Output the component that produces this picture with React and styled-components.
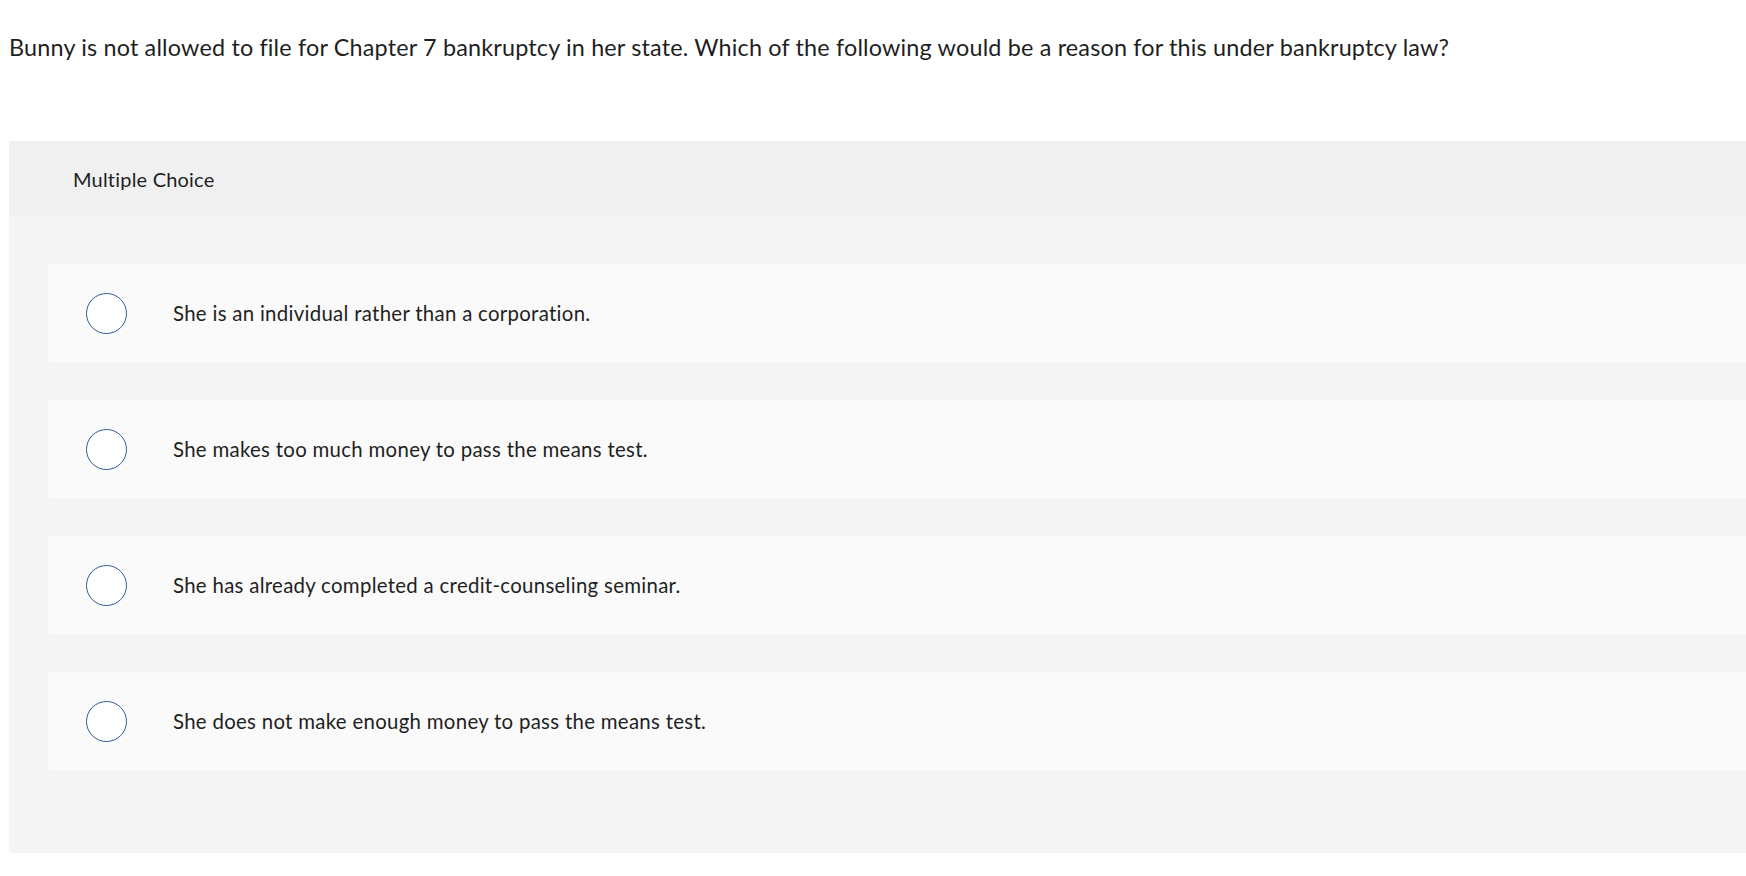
import React from "react";
import styled, { createGlobalStyle } from "styled-components";

const Global = createGlobalStyle`
  html, body {
    margin: 0;
    padding: 0;
    background: #ffffff;
    overflow: hidden;
  }
  body {
    font-family: Lato, "Open Sans", Arial, sans-serif;
    font-variant-ligatures: none;
    color: #1f1f1f;
  }
`;

const Page = styled.main`
  padding-left: 9px;
  width: 1746px;
  box-sizing: border-box;
`;

const Question = styled.p`
  margin: 31px 0 0 0;
  font-size: 23.4px;
  line-height: 32px;
  letter-spacing: 0.17px;
  color: #1f1f1f;
  white-space: nowrap;
`;

const Card = styled.section`
  margin-top: 78px;
  width: 1800px;
  border-radius: 4px;
  overflow: hidden;
  background: #f5f5f5;
`;

const CardHeader = styled.header`
  height: 75px;
  display: flex;
  align-items: center;
  padding-left: 64px;
  background: #f0f0f0;
  font-size: 20px;
  letter-spacing: 0.2px;
  color: #1f1f1f;
`;

const Options = styled.div`
  display: flex;
  flex-direction: column;
  gap: 37px;
  padding: 48px 0 82px 39px;
`;

const Option = styled.label`
  height: 99px;
  display: flex;
  align-items: center;
  gap: 46px;
  padding-left: 38px;
  background: #fafafa;
  border-radius: 4px;
  cursor: pointer;
`;

const Radio = styled.span`
  flex: none;
  width: 41px;
  height: 41px;
  box-sizing: border-box;
  border: 1.5px solid #2e5b8f;
  border-radius: 50%;
  background: #ffffff;
`;

const OptionText = styled.span`
  font-size: 20.4px;
  line-height: 24px;
  padding-bottom: 2px;
  letter-spacing: 0.3px;
  color: #1f1f1f;
`;

const choices = [
  "She is an individual rather than a corporation.",
  "She makes too much money to pass the means test.",
  "She has already completed a credit-counseling seminar.",
  "She does not make enough money to pass the means test.",
];

export default function App() {
  return (
    <>
      <Global />
      <Page>
        <Question>
          Bunny is not allowed to file for Chapter 7 bankruptcy in her state. Which of the following would be a reason for this under bankruptcy law?
        </Question>
        <Card>
          <CardHeader>Multiple Choice</CardHeader>
          <Options>
            {choices.map((c) => (
              <Option key={c}>
                <Radio />
                <OptionText>{c}</OptionText>
              </Option>
            ))}
          </Options>
        </Card>
      </Page>
    </>
  );
}
